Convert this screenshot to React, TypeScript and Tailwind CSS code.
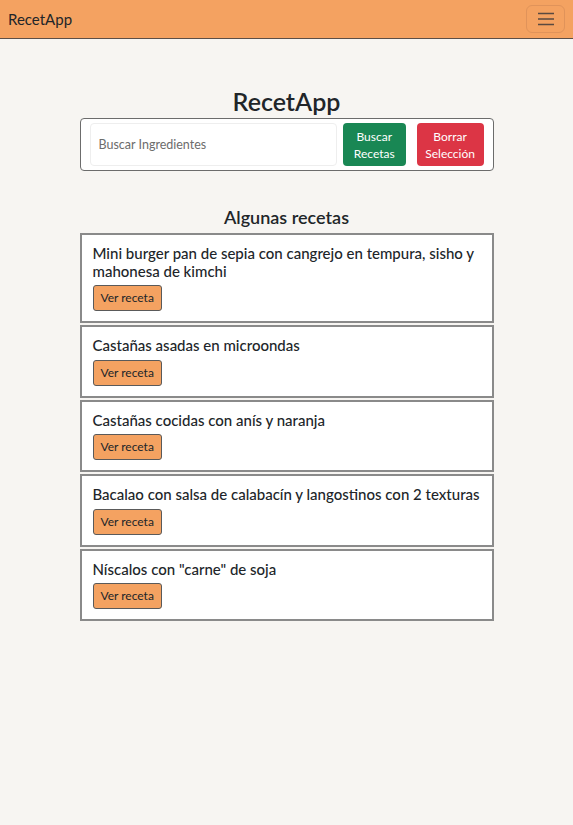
const recetas = [
  "Mini burger pan de sepia con cangrejo en tempura, sisho y mahonesa de kimchi",
  "Castañas asadas en microondas",
  "Castañas cocidas con anís y naranja",
  "Bacalao con salsa de calabacín y langostinos con 2 texturas",
  'Níscalos con "carne" de soja',
];

export default function App() {
  return (
    <div className="min-h-screen bg-[#f7f5f2] text-[#212529] font-['Lato',sans-serif]">
      <nav className="h-[39px] bg-[#f4a261] border-b border-[#5c4f47] flex items-center justify-between pl-2 pr-2">
        <span className="text-[15px]">RecetApp</span>
        <button className="w-[39px] h-[28px] border border-[#e0935a] rounded-md flex items-center justify-center">
          <svg width="18" height="14" viewBox="0 0 18 14">
            <path d="M1 1.5h16M1 7h16M1 12.5h16" stroke="#5a4a40" strokeWidth="1.6" />
          </svg>
        </button>
      </nav>

      <main className="w-[414px] mx-auto pt-[47px]">
        <h1 className="text-center text-[25px] font-semibold leading-[30px] mb-[2px]">RecetApp</h1>
        <div className="border border-[#6c6c6c] rounded-[4px] bg-white flex items-center px-[9px] py-[4px] gap-[6px]">
          <input
            placeholder="Buscar Ingredientes"
            className="w-[248px] h-[43px] border border-[#eeeeee] rounded-[4px] px-[8px] text-[12.5px] placeholder:text-[#6c6c6c] outline-none"
          />
          <button className="w-[63px] h-[43px] bg-[#198754] text-white text-[12px] leading-[17px] rounded-[4px]">
            Buscar<br />Recetas
          </button>
          <button className="ml-[5px] w-[67px] h-[43px] bg-[#dc3545] text-white text-[12px] leading-[17px] rounded-[4px]">
            Borrar<br />Selección
          </button>
        </div>

        <h2 className="text-center text-[18px] font-semibold mt-[33px] leading-[26px] mb-[3px]">Algunas recetas</h2>
        <div className="flex flex-col gap-[2px]">
          {recetas.map((r) => (
            <div key={r} className="bg-white border-2 border-[#8a8a8a] px-[11px] py-[10px]">
              <p className="text-[15px] font-medium leading-[17.5px] mb-[4px]">{r}</p>
              <button className="h-[26px] px-[7px] bg-[#f4a261] border border-[#5a5a5a] rounded-[3px] text-[12px]">
                Ver receta
              </button>
            </div>
          ))}
        </div>
      </main>
    </div>
  );
}
